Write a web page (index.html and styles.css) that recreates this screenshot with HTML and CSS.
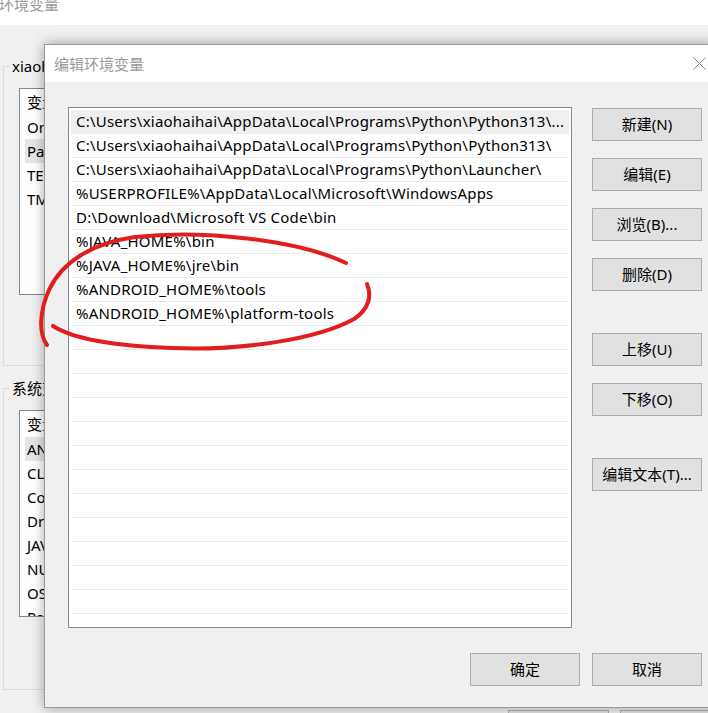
FILE: index.html
```html
<!DOCTYPE html>
<html lang="zh-CN">
<head>
<meta charset="utf-8">
<title>编辑环境变量</title>
<link rel="stylesheet" href="styles.css">
</head>
<body>
  <div class="env-window">
    <div class="env-title">环境变量</div>
    <div class="env-body">
      <fieldset class="group group-user">
        <legend>xiaohaihai 的用户变量(U)</legend>
        <div class="bg-list">
          <div class="bg-head">变量</div>
          <div class="bg-item">OneDrive</div>
          <div class="bg-item selected">Path</div>
          <div class="bg-item">TEMP</div>
          <div class="bg-item">TMP</div>
        </div>
      </fieldset>
      <fieldset class="group group-sys">
        <legend>系统变量(S)</legend>
        <div class="bg-list">
          <div class="bg-head">变量</div>
          <div class="bg-item selected">ANDROID_HOME</div>
          <div class="bg-item">CLASSPATH</div>
          <div class="bg-item">ComSpec</div>
          <div class="bg-item">DriverData</div>
          <div class="bg-item">JAVA_HOME</div>
          <div class="bg-item">NUMBER_OF_PROCESSORS</div>
          <div class="bg-item">OS</div>
          <div class="bg-item">Path</div>
        </div>
      </fieldset>
      <div class="env-footer">
        <button class="btn">确定</button>
        <button class="btn">取消</button>
      </div>
    </div>
  </div>

  <div class="dialog">
    <div class="dlg-title">
      <span>编辑环境变量</span>
      <span class="dlg-close">
        <svg width="13" height="13" viewBox="0 0 13 13"><path d="M0.5 0.5 L12.5 12.5 M12.5 0.5 L0.5 12.5" stroke="#8a8a8a" stroke-width="1" fill="none"/></svg>
      </span>
    </div>
    <div class="dlg-body">
      <div class="dlg-main">
        <div class="path-list">
          <div class="path-row selected">C:\Users\xiaohaihai\AppData\Local\Programs\Python\Python313\...</div>
          <div class="path-row">C:\Users\xiaohaihai\AppData\Local\Programs\Python\Python313\</div>
          <div class="path-row">C:\Users\xiaohaihai\AppData\Local\Programs\Python\Launcher\</div>
          <div class="path-row">%USERPROFILE%\AppData\Local\Microsoft\WindowsApps</div>
          <div class="path-row">D:\Download\Microsoft VS Code\bin</div>
          <div class="path-row">%JAVA_HOME%\bin</div>
          <div class="path-row">%JAVA_HOME%\jre\bin</div>
          <div class="path-row">%ANDROID_HOME%\tools</div>
          <div class="path-row">%ANDROID_HOME%\platform-tools</div>
          <div class="path-row"></div>
          <div class="path-row"></div>
          <div class="path-row"></div>
          <div class="path-row"></div>
          <div class="path-row"></div>
          <div class="path-row"></div>
          <div class="path-row"></div>
          <div class="path-row"></div>
          <div class="path-row"></div>
          <div class="path-row"></div>
          <div class="path-row"></div>
          <div class="path-row"></div>
        </div>
        <div class="side-buttons">
          <button class="btn">新建(N)</button>
          <button class="btn">编辑(E)</button>
          <button class="btn">浏览(B)...</button>
          <button class="btn">删除(D)</button>
          <button class="btn sep">上移(U)</button>
          <button class="btn">下移(O)</button>
          <button class="btn sep">编辑文本(T)...</button>
        </div>
      </div>
      <div class="dlg-footer">
        <button class="btn">确定</button>
        <button class="btn">取消</button>
      </div>
    </div>
  </div>

  <svg class="annotation" width="708" height="713" viewBox="0 0 708 713">
    <path d="M346,263 C300,241 205,229 135,237 C92,243 62,262 49,290 C40,310 38,333 47,345" />
    <path d="M53,326 C72,338 112,346 172,348 C242,351 318,339 354,319 C369,309 372,296 367,284" />
  </svg>
</body>
</html>
```

FILE: styles.css
```css
* {
  box-sizing: border-box;
}

html,
body {
  margin: 0;
  padding: 0;
}

body {
  position: relative;
  width: 708px;
  height: 713px;
  overflow: hidden;
  background: #f0f0f0;
  font-family: "Noto Sans", "Noto Sans CJK SC", sans-serif;
  font-size: 15px;
  color: #000;
}

.btn {
  display: block;
  width: 110px;
  height: 33px;
  padding: 0;
  border: 1px solid #adadad;
  background: #e1e1e1;
  color: #000;
  font-family: "Noto Sans", "Noto Sans CJK SC", sans-serif;
  font-size: 15px;
  line-height: 31px;
  text-align: center;
  white-space: nowrap;
}

/* background window */
.env-window {
  position: absolute;
  left: 0;
  top: 0;
  width: 720px;
  height: 100%;
  overflow: hidden;
  background: #f0f0f0;
}

.env-title {
  height: 25px;
  background: #fff;
  color: #9a9a9a;
  line-height: 8px;
  margin-left: -1px;
}

.env-body {
  padding-left: 3px;
}

.group {
  margin: 31px 0 0 0;
  padding: 0;
  width: 690px;
  border: 1px solid #dcdcdc;
  min-width: 0;
}

.group legend {
  margin-left: 6px;
  padding: 0 2px;
  line-height: 20px;
}

.group-user {
  height: 310px;
}

.group-sys {
  margin-top: 12px;
  height: 312px;
}

.bg-list {
  margin: 12px 0 0 15px;
  width: 560px;
  height: 207px;
  border: 1px solid #828790;
  background: #fff;
  overflow: hidden;
}

.bg-head {
  height: 26px;
  line-height: 26px;
  padding-left: 7px;
}

.bg-item {
  height: 24px;
  line-height: 24px;
  margin-left: 5px;
  padding-left: 2px;
}

.bg-item.selected {
  background: #e5e5e5;
}

.env-footer {
  display: flex;
  gap: 11px;
  margin-top: 20px;
  padding-left: 505px;
}

/* dialog */
.dialog {
  position: absolute;
  left: 44px;
  top: 44px;
  width: 676px;
  height: 664px;
  border: 1px solid #9a9a9a;
  background: #f0f0f0;
  box-shadow: 0 0 12px rgba(0, 0, 0, 0.35);
}

.dlg-title {
  height: 37px;
  background: #fff;
  display: flex;
  align-items: center;
  justify-content: space-between;
  padding-left: 9px;
  color: #9a9a9a;
}

.dlg-close {
  width: 40px;
  height: 37px;
  display: flex;
  align-items: center;
  justify-content: center;
}

.dlg-body {
  padding: 25px 17px 0 23px;
}

.dlg-main {
  display: flex;
  gap: 20px;
}

.path-list {
  width: 504px;
  height: 521px;
  border: 1px solid #828790;
  background: #fff;
  padding: 2px 2px 0;
  overflow: hidden;
}

.path-row {
  height: 24px;
  line-height: 23px;
  border-bottom: 1px solid #ebebeb;
  padding-left: 5px;
  letter-spacing: 0.22px;
  white-space: nowrap;
  overflow: hidden;
}

.path-row.selected {
  background: #efefef;
}

.side-buttons {
  display: flex;
  flex-direction: column;
  gap: 17px;
  padding-top: 1px;
}

.side-buttons .sep {
  margin-top: 25px;
}

.dlg-footer {
  display: flex;
  justify-content: flex-end;
  gap: 12px;
  margin-top: 25px;
}

/* hand-drawn red annotation */
.annotation {
  position: absolute;
  left: 0;
  top: 0;
  pointer-events: none;
}

.annotation path {
  fill: none;
  stroke: #e01e1e;
  stroke-width: 4;
  stroke-linecap: round;
  stroke-linejoin: round;
}
```
